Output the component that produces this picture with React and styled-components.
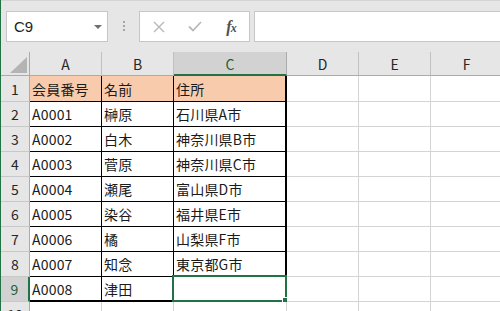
import React from "react";
import styled, { createGlobalStyle } from "styled-components";

const GlobalStyle = createGlobalStyle`
  html, body {
    margin: 0;
    padding: 0;
    background: #ffffff;
    overflow: hidden;
  }
  body {
    font-family: "Noto Sans CJK JP", "Liberation Sans", sans-serif;
  }
`;

const GREEN = "#217346";

const Window = styled.div`
  width: 500px;
  height: 311px;
  overflow: hidden;
  border-left: 1px solid ${GREEN};
  box-sizing: border-box;
  background: #ffffff;
`;

const Toolbar = styled.div`
  height: 52px;
  box-sizing: border-box;
  background: #e6e6e6;
  border-top: 1px solid #d4d4d4;
  padding: 10px 0 0 5px;
  display: flex;
  align-items: flex-start;
  white-space: nowrap;
`;

const NameBox = styled.div`
  width: 102px;
  height: 31px;
  box-sizing: border-box;
  flex: none;
  background: #ffffff;
  border: 1px solid #c6c6c6;
  display: flex;
  align-items: center;
  justify-content: space-between;
  padding: 0 5px 0 7px;
  font-family: "Liberation Sans", sans-serif;
  font-size: 15px;
  color: #222;
`;

const Caret = styled.span`
  width: 0;
  height: 0;
  border-left: 4px solid transparent;
  border-right: 4px solid transparent;
  border-top: 4px solid #6f6f6f;
`;

const Grip = styled.div`
  flex: none;
  width: 2px;
  margin: 10px 14px 0 15px;
  display: flex;
  flex-direction: column;
  gap: 2px;
  span {
    width: 2px;
    height: 2px;
    background: #a6a6a6;
  }
`;

const ActionBox = styled.div`
  flex: none;
  width: 111px;
  height: 31px;
  box-sizing: border-box;
  background: #ffffff;
  border: 1px solid #c6c6c6;
  display: grid;
  grid-template-columns: 37px 36px 36px;
  align-items: center;
  justify-items: center;
`;

const Fx = styled.span`
  font-family: "Liberation Serif", serif;
  font-style: italic;
  font-weight: bold;
  font-size: 16px;
  line-height: 1;
  color: #505050;
  letter-spacing: -1px;
  small {
    font-size: 12px;
  }
`;

const FormulaInput = styled.div`
  flex: none;
  width: 260px;
  height: 31px;
  margin-left: 4px;
  box-sizing: border-box;
  background: #ffffff;
  border: 1px solid #c6c6c6;
`;

const Sheet = styled.div`
  display: grid;
  grid-template-columns: 29px 72px 72px 113px 72px 72px 72px;
  grid-template-rows: 24px 26px repeat(9, 25px);
`;

const Corner = styled.div`
  background: #e6e6e6;
  border-right: 1px solid #ababab;
  border-bottom: 1px solid #ababab;
  box-sizing: border-box;
  display: flex;
  align-items: flex-end;
  justify-content: flex-end;
  padding: 0 2px 2px 0;
`;

const ColHead = styled.div`
  box-sizing: border-box;
  background: ${(p) => (p.$active ? "#d2d2d2" : "#e6e6e6")};
  border-right: 1px solid ${(p) => (p.$active ? "#ababab" : "#c0c0c0")};
  border-bottom: ${(p) => (p.$active ? `2px solid ${GREEN}` : "1px solid #ababab")};
  display: flex;
  align-items: center;
  justify-content: center;
  font-size: 14px;
  color: ${(p) => (p.$active ? "#1d5f3b" : "#262626")};
  padding-top: ${(p) => (p.$active ? "1px" : "0")};
`;

const RowHead = styled.div`
  box-sizing: border-box;
  background: ${(p) => (p.$active ? "#d2d2d2" : "#e6e6e6")};
  border-right: ${(p) => (p.$active ? `2px solid ${GREEN}` : "1px solid #ababab")};
  border-bottom: 1px solid #c8c8c8;
  display: flex;
  align-items: center;
  justify-content: center;
  font-size: 14px;
  color: ${(p) => (p.$active ? "#1d5f3b" : "#262626")};
  line-height: 1;
  overflow: hidden;
`;

const lineFor = (kind) => {
  if (kind === "thick") return "2px solid #000";
  if (kind === "thin") return "1px solid #000";
  return "1px solid #d4d4d4";
};

const Cell = styled.div`
  position: relative;
  box-sizing: border-box;
  background: ${(p) => (p.$fill ? "#f8cbad" : "#ffffff")};
  border-right: ${(p) => lineFor(p.$right)};
  border-bottom: ${(p) => lineFor(p.$bottom)};
  display: flex;
  align-items: center;
  padding-left: 2px;
  font-size: 14px;
  letter-spacing: 0.2px;
  color: #1a1a1a;
  white-space: nowrap;
`;

const Selection = styled.div`
  position: absolute;
  top: -2px;
  left: -2px;
  right: -1px;
  bottom: -1px;
  border: 2px solid ${GREEN};
  pointer-events: none;
`;

const Handle = styled.div`
  position: absolute;
  right: -5px;
  bottom: -5px;
  width: 6px;
  height: 6px;
  background: ${GREEN};
  border: 1px solid #ffffff;
`;

const rows = [
  ["会員番号", "名前", "住所"],
  ["A0001", "榊原", "石川県A市"],
  ["A0002", "白木", "神奈川県B市"],
  ["A0003", "菅原", "神奈川県C市"],
  ["A0004", "瀬尾", "富山県D市"],
  ["A0005", "染谷", "福井県E市"],
  ["A0006", "橘", "山梨県F市"],
  ["A0007", "知念", "東京都G市"],
  ["A0008", "津田", ""],
  ["", "", ""],
];

const letters = ["A", "B", "C", "D", "E", "F"];

function CloseIcon() {
  return (
    <svg width="12" height="12" viewBox="0 0 12 12">
      <path d="M1 1L11 11M11 1L1 11" stroke="#b9b9b9" strokeWidth="1.4" fill="none" />
    </svg>
  );
}

function CheckIcon() {
  return (
    <svg width="14" height="11" viewBox="0 0 14 11">
      <path d="M1 5.5L5 9.5L13 1" stroke="#b9b9b9" strokeWidth="1.8" fill="none" />
    </svg>
  );
}

function CornerTriangle() {
  return (
    <svg width="17" height="16" viewBox="0 0 17 16">
      <polygon points="17,0 17,16 0,16" fill="#b4b4b4" />
    </svg>
  );
}

function bordersFor(r, c) {
  // r: 0-based data row, c: 0-based column index
  if (r > 8 || c > 2) return { right: "grid", bottom: "grid" };
  const right = c === 2 ? (r < 8 ? "thick" : "grid") : "thin";
  const bottom = r === 8 ? (c < 2 ? "thick" : "grid") : "thin";
  return { right, bottom };
}

export default function App() {
  return (
    <>
      <GlobalStyle />
      <Window>
        <Toolbar>
          <NameBox>
            C9
            <Caret />
          </NameBox>
          <Grip>
            <span />
            <span />
            <span />
          </Grip>
          <ActionBox>
            <CloseIcon />
            <CheckIcon />
            <Fx>
              f<small>x</small>
            </Fx>
          </ActionBox>
          <FormulaInput />
        </Toolbar>

        <Sheet>
          <Corner>
            <CornerTriangle />
          </Corner>
          {letters.map((l) => (
            <ColHead key={l} $active={l === "C"}>
              {l}
            </ColHead>
          ))}

          {rows.map((row, r) => (
            <React.Fragment key={r}>
              <RowHead $active={r === 8}>{r + 1}</RowHead>
              {letters.map((l, c) => {
                const b = bordersFor(r, c);
                const text = c < 3 ? row[c] : "";
                return (
                  <Cell key={l} $fill={r === 0 && c < 3} $right={b.right} $bottom={b.bottom}>
                    {text}
                    {r === 8 && c === 2 && (
                      <Selection>
                        <Handle />
                      </Selection>
                    )}
                  </Cell>
                );
              })}
            </React.Fragment>
          ))}
        </Sheet>
      </Window>
    </>
  );
}
